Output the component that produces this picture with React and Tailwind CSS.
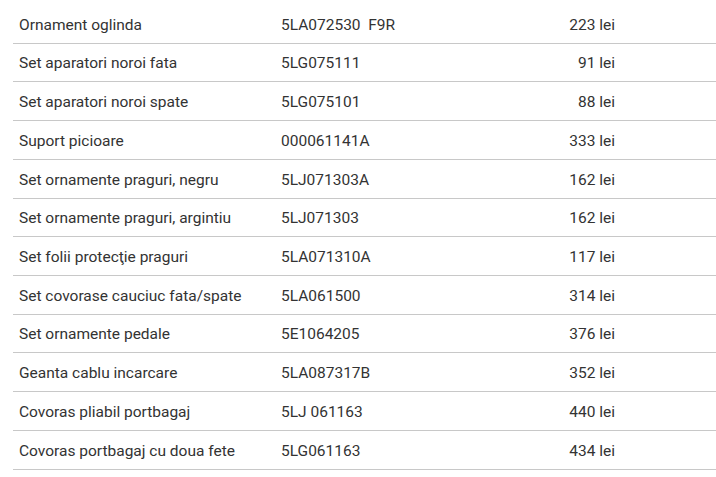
const rows = [
  ["Ornament oglinda", "5LA072530  F9R", "223 lei"],
  ["Set aparatori noroi fata", "5LG075111", "91 lei"],
  ["Set aparatori noroi spate", "5LG075101", "88 lei"],
  ["Suport picioare", "000061141A", "333 lei"],
  ["Set ornamente praguri, negru", "5LJ071303A", "162 lei"],
  ["Set ornamente praguri, argintiu", "5LJ071303", "162 lei"],
  ["Set folii protecţie praguri", "5LA071310A", "117 lei"],
  ["Set covorase cauciuc fata/spate", "5LA061500", "314 lei"],
  ["Set ornamente pedale", "5E1064205", "376 lei"],
  ["Geanta cablu incarcare", "5LA087317B", "352 lei"],
  ["Covoras pliabil portbagaj", "5LJ 061163", "440 lei"],
  ["Covoras portbagaj cu doua fete", "5LG061163", "434 lei"],
];

export default function App() {
  return (
    <div
      className="w-[716px] h-[477px] bg-white overflow-hidden pt-[5px] pl-[13px] text-[15.5px] text-[#333333]"
      style={{ fontFamily: "Roboto, 'Liberation Sans', sans-serif" }}
    >
      {rows.map((r, i) => (
        <div
          key={i}
          className="flex items-center h-[38.73px] border-b border-[#c8c8c8]"
        >
          <div className="w-[268px] pl-[6px] pt-[3px]">{r[0]}</div>
          <div className="w-[200px] whitespace-pre pt-[3px]">{r[1]}</div>
          <div className="w-[134px] text-right pt-[3px]">{r[2]}</div>
        </div>
      ))}
    </div>
  );
}
